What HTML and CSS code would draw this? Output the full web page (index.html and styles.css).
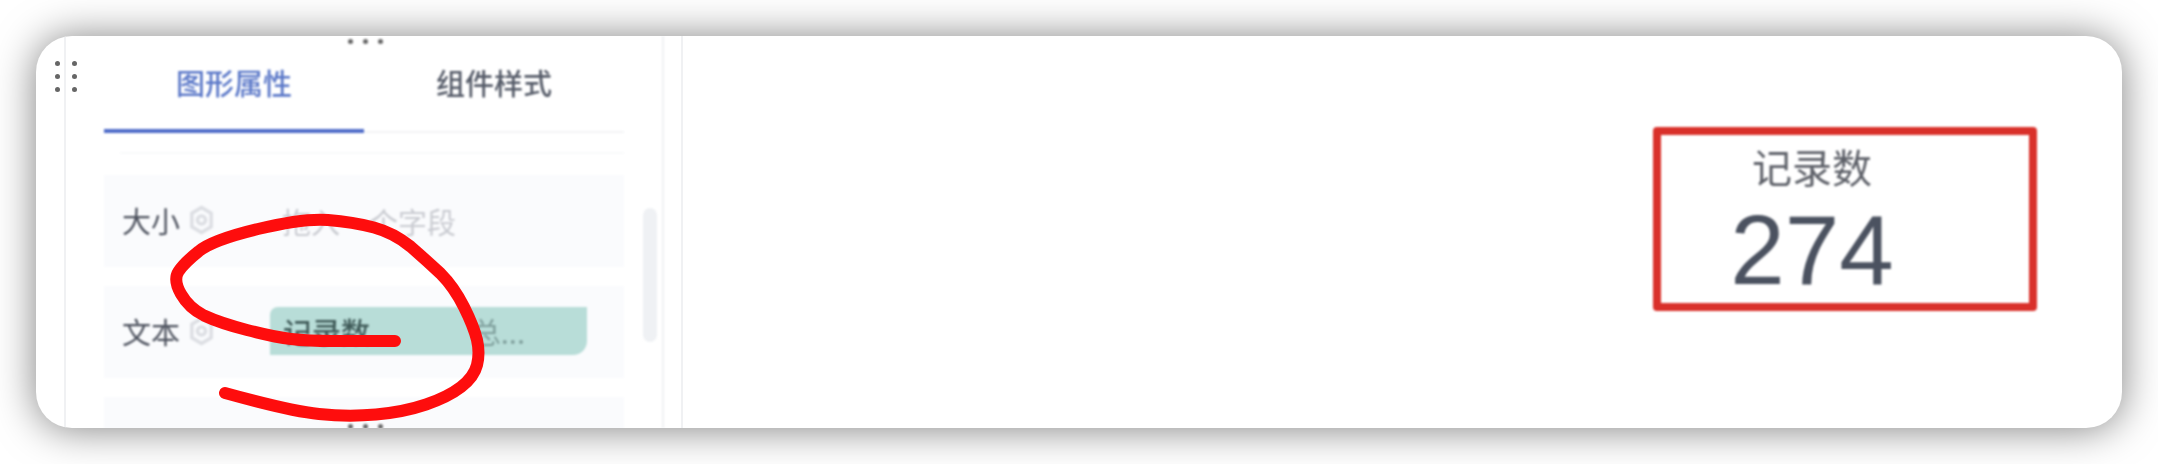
FILE: index.html
```html
<!doctype html>
<html lang="en">
<head>
    <meta charset="UTF-8">
    <title>Document</title>
    <link rel="stylesheet" href="styles.css">
</head>
<body>

    <div class="window">
        <div class="rail"></div>

        <div class="panel">
            <ul class="tabs">
                <li class="active">图形属性</li>
                <li>组件样式</li>
            </ul>
            <div class="tabs-line"></div>

            <div class="row">
                <span class="row-label">大小</span>
                <svg class="gear" viewBox="0 0 22 26"><path d="M11 2l8.5 5v12L11 24l-8.5-5V7z"/><circle cx="11" cy="13" r="3.6"/></svg>
                <span class="placeholder">拖入一个字段</span>
            </div>
            <div class="row">
                <span class="row-label">文本</span>
                <svg class="gear" viewBox="0 0 22 26"><path d="M11 2l8.5 5v12L11 24l-8.5-5V7z"/><circle cx="11" cy="13" r="3.6"/></svg>
                <div class="chip">
                    <span>记录数</span>
                    <span class="chip-sum">总...</span>
                </div>
            </div>
            <div class="row"></div>

            <div class="scrollbar"></div>
            <div class="handle handle-top"><i></i><i></i><i></i></div>
            <div class="handle handle-bottom"><i></i><i></i><i></i></div>
        </div>

        <div class="gutter"></div>

        <div class="canvas">
            <div class="record">
                <div class="record-title">记录数</div>
                <div class="record-value">274</div>
            </div>
        </div>

        <div class="grip">
            <i></i><i></i><i></i><i></i><i></i><i></i>
        </div>

        <!-- hand drawn circle on top of the screenshot -->
        <svg class="scribble" viewBox="0 0 2086 392">
            <path d="M359 305 L296 305 Q272 305 255 303 Q238 301 211 294 Q184 287 168 279.5 Q153 272 145 258 Q137 244 142.5 235.5 Q148 227 162.5 215.5 Q176 204 222 193 Q268 182 292 184 Q317 186 338 191.5 Q358 197 374.5 210.5 Q390 224 404.5 237.5 Q418 251 428 271 Q438 291 441 304 Q444 317 441 329 Q438 341 425 351 Q412 361 390 368.5 Q368 376 340 378.5 Q312 381 283 378 Q254 375 189 357"/>
        </svg>
    </div>

</body>
</html>
```

FILE: styles.css
```css
*{
    padding: 0;
    margin: 0;
    box-sizing: border-box;
}
ul,li{
    list-style: none;
}
body{
    background-color: #fff;
    font-family: "Noto Sans CJK SC", "Liberation Sans", sans-serif;
    overflow: hidden;
}
.window{
    position: relative;
    display: flex;
    width: 2086px;
    height: 392px;
    margin: 36px;
    background-color: #fff;
    border-radius: 36px;
    box-shadow: 0 1px 40px rgba(0,0,0,.5);
    overflow: hidden;
}
.rail{
    width: 30px;
    border-right: 2px solid #f0f1f3;
}
.panel{
    position: relative;
    width: 598px;
    padding: 0 38px;
    border-right: 2px solid #f0f1f3;
    filter: blur(.8px);
}
.tabs{
    display: flex;
    height: 97px;
    border-bottom: 2px solid #f3f4f6;
}
.tabs li{
    flex: 1;
    height: 97px;
    line-height: 92px;
    text-align: center;
    font-size: 29px;
    font-weight: 500;
    color: #555b68;
}
.tabs li.active{
    color: #5b78c8;
    border-bottom: 4px solid #4f6cc9;
}
.tabs-line{
    height: 2px;
    margin: 19px 0 21px 16px;
    background-color: #f9fafb;
}
.row{
    display: flex;
    align-items: center;
    height: 92px;
    margin-bottom: 19px;
    padding-left: 18px;
    background-color: #fafbfd;
}
.row-label{
    width: 58px;
    margin-top: -2px;
    font-size: 29px;
    color: #4d525e;
}
.gear{
    width: 25px;
    height: 30px;
    margin: -2px 0 0 9px;
    fill: none;
    stroke: #dcdee3;
    stroke-width: 3;
}
.placeholder{
    margin-left: 68px;
    font-size: 29px;
    color: #c9cbd1;
}
.chip{
    display: flex;
    justify-content: space-between;
    align-items: center;
    width: 317px;
    height: 48px;
    margin: -2px 0 0 56px;
    padding: 0 62px 0 13px;
    background-color: #b8ddd8;
    border-radius: 8px 0 14px 0;
    font-size: 29px;
    font-weight: 500;
    color: #3f5a58;
}
.chip-sum{
    font-weight: 400;
    color: #7f9f9c;
}
.scrollbar{
    position: absolute;
    left: 577px;
    top: 172px;
    width: 14px;
    height: 134px;
    background-color: #eff1f4;
    border-radius: 7px;
}
.handle{
    position: absolute;
    left: 282px;
    display: flex;
    gap: 10px;
}
.handle-top{
    top: 3px;
}
.handle-bottom{
    top: 388px;
}
.handle i,.grip i{
    display: block;
    width: 5px;
    height: 5px;
    background-color: #666;
    border-radius: 50%;
}
.gutter{
    width: 19px;
    border-right: 2px solid #f0f1f3;
}
.canvas{
    flex: 1;
    display: flex;
    justify-content: flex-end;
    padding: 91px 85px 0 0;
    filter: blur(.8px);
}
.record{
    display: flex;
    flex-direction: column;
    align-items: center;
    width: 384px;
    height: 184px;
    padding: 7px 66px 0 0;
    border: 8px solid #d9302a;
    border-radius: 4px;
}
.record-title{
    font-size: 40px;
    line-height: 48px;
    color: #5d6068;
}
.record-value{
    margin-top: 6px;
    font-family: "Liberation Sans", sans-serif;
    font-size: 98px;
    line-height: 108px;
    color: #4b5260;
}
.grip{
    position: absolute;
    left: 19px;
    top: 25px;
    display: grid;
    grid-template-columns: 5px 5px;
    column-gap: 12px;
    row-gap: 8px;
    filter: blur(.5px);
}
.scribble{
    position: absolute;
    left: 0;
    top: 0;
    width: 2086px;
    height: 392px;
    fill: none;
    stroke: #fe0d0d;
    stroke-width: 12;
    stroke-linecap: round;
    stroke-linejoin: round;
}
```
